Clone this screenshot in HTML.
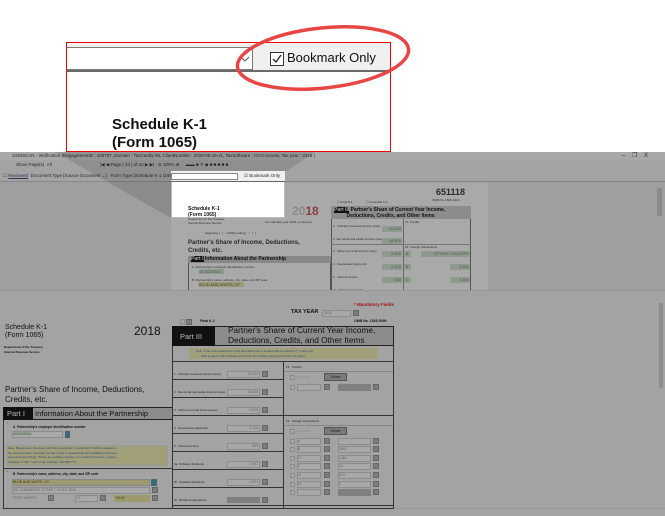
<!DOCTYPE html>
<html><head><meta charset="utf-8"><style>
*{margin:0;padding:0;box-sizing:border-box}
body{width:665px;height:516px;overflow:hidden;background:#fff;font-family:"Liberation Sans",Arial,sans-serif;position:relative}
.a{position:absolute}
.t{position:absolute;white-space:nowrap;color:#2a2a2a}
.g{position:absolute;background:#8f9a8f;font-size:4px;color:#4a5a4a;text-align:right;padding-right:1px;line-height:6px}
.in{position:absolute;background:#a8a8a8;border:1px solid #8c8c8c;font-size:3.5px;color:#666;line-height:5px}
.btn{position:absolute;width:6px;height:6px;background:#7c7c7c;border:1px solid #666}
.h{position:absolute;height:1px;background:#333}
.v{position:absolute;width:1px;background:#333}
.cb{position:absolute;width:5px;height:5px;border:1px solid #8a8a8a;background:#a6a6a6}
</style></head><body>

<!-- top zoom -->
<div class="a" style="left:66px;top:42px;width:325px;height:110px;border:1px solid #e00;background:#fff;overflow:hidden">
 <div class="a" style="left:0;top:0;width:325px;height:28px;background:#f0f0f0"></div>
 <div class="a" style="left:-2px;top:4px;width:188px;height:23px;background:#fff;border:1px solid #7a7a7a"></div>
 <svg class="a" style="left:173px;top:12px" width="10" height="8"><path d="M1 2 L5 6 L9 2" stroke="#555" fill="none"/></svg>
 <div class="a" style="left:203px;top:9px;width:14px;height:14px;border:1px solid #333;background:#fff"></div>
 <svg class="a" style="left:204px;top:10px" width="12" height="12"><path d="M2 6 L5 9 L10 2" stroke="#222" stroke-width="1.3" fill="none"/></svg>
 <div class="t" style="left:220px;top:7px;font-size:13px;color:#111">Bookmark Only</div>
 <div class="a" style="left:0;top:27px;width:325px;height:2px;background:#6a6a6a"></div>
 <div class="t" style="left:45px;top:73px;font-size:15px;font-weight:bold;color:#111;line-height:18px">Schedule K-1<br>(Form 1065)</div>
</div>
<svg class="a" style="left:228px;top:18px" width="190" height="80"><ellipse cx="95" cy="40" rx="86" ry="30" transform="rotate(-6 95 40)" fill="none" stroke="#e84545" stroke-width="3.5"/></svg>

<!-- middle app screenshot -->
<div class="a" style="left:0;top:152px;width:665px;height:138px;background:#9f9f9f;overflow:hidden">
 <div class="a" style="left:0;top:0;width:665px;height:8px;background:#a8a8a8"></div>
 <div class="t" style="left:12px;top:1px;font-size:4.5px">1040SCAN : Verification (EngagementID : 429797, Domain : TaxCaddy-06, ClientNumber : 2020-06-15-v1, TaxSoftware : CCH Access, Tax year : 2018 )</div>
 <div class="t" style="left:622px;top:0;font-size:6px">–&nbsp;&nbsp;&nbsp;&nbsp;❐&nbsp;&nbsp;&nbsp;&nbsp;X</div>
 <div class="a" style="left:0;top:8px;width:665px;height:11px;background:#a3a3a3"></div>
 <div class="t" style="left:16px;top:10px;font-size:4.5px">Show Page(s) &nbsp;All</div>
 <div class="t" style="left:100px;top:10px;font-size:4.5px">|◀ ◀ Page [ 23 ] of 42 ▶ ▶| &nbsp; ⊖ 100% ⊕ &nbsp;&nbsp;&nbsp; ▬▬ ■ ✕ ◆ ■ ■ ■ ■ ■</div>
 <div class="a" style="left:0;top:19px;width:665px;height:11px;background:#a3a3a3;border-bottom:1px solid #888"></div>
 <div class="t" style="left:3px;top:21px;font-size:4.5px">☐ <u style="color:#335">Reviewed</u> &nbsp;Document Type [Source Document ⌄] &nbsp; Form Type [Schedule K-1 (1065)]</div>
 <div class="a" style="left:171px;top:31px;width:317px;height:107px;background:#a9a9a9"></div>
 <svg class="a" style="left:0;top:0" width="665" height="138"><polygon points="55,0 171,66 285,20 315,0" fill="#000" opacity=".12"/></svg>
 <div class="a" style="left:171px;top:19px;width:114px;height:47px;background:#fff;border:1px solid #bbb"></div>
 <div class="a" style="left:171px;top:19px;width:114px;height:11px;background:#f0f0f0;border-bottom:1px solid #666"></div>
 <div class="a" style="left:171px;top:21px;width:67px;height:7px;background:#fff;border:1px solid #888"></div>
 <div class="t" style="left:244px;top:21px;font-size:4.5px;color:#222">☑ Bookmark Only</div>
 <div class="t" style="left:188px;top:54px;font-size:5px;font-weight:bold;color:#111;line-height:6px">Schedule K-1<br>(Form 1065)</div>
 <div class="t" style="left:188px;top:66px;font-size:3px;line-height:3.5px">Department of the Treasury<br>Internal Revenue Service</div>
 <div class="t" style="left:292px;top:52px;font-size:12px;font-weight:bold;color:#8a8a8a">20<span style="color:#8a4040">18</span></div>
 <div class="t" style="left:265px;top:68px;font-size:3px">For calendar year 2018, or tax year</div>
 <div class="t" style="left:205px;top:79px;font-size:3px">beginning [&nbsp;&nbsp;&nbsp;/&nbsp;&nbsp;&nbsp;/ 2018] ending [&nbsp;&nbsp;&nbsp;/&nbsp;&nbsp;&nbsp;/&nbsp;&nbsp;&nbsp;]</div>
 <div class="t" style="left:188px;top:88px;font-size:6px;font-weight:bold;line-height:7.5px">Partner's Share of Income, Deductions,<br>Credits, etc.</div>
 <div class="a" style="left:188px;top:104px;width:143px;height:36px;border:1px solid #555"></div>
 <div class="a" style="left:188px;top:104px;width:143px;height:7px;background:#888"></div>
 <div class="t" style="left:191px;top:104px;font-size:5px;font-weight:bold;color:#111"><span style="background:#111;color:#aaa">Part I</span> Information About the Partnership</div>
 <div class="t" style="left:192px;top:113px;font-size:3px">A&nbsp; Partnership's employer identification number</div>
 <div class="g" style="left:199px;top:117px;width:25px;height:5px;text-align:left">45-5425541</div>
 <div class="t" style="left:192px;top:126px;font-size:3px">B&nbsp; Partnership's name, address, city, state, and ZIP code</div>
 <div class="a" style="left:199px;top:130px;width:45px;height:5px;background:#9c9a74;font-size:4px;color:#443">BLUE AND WHITE, LP</div>
 <div class="t" style="left:436px;top:35px;font-size:9px;font-weight:bold">651118</div>
 <div class="t" style="left:432px;top:46px;font-size:3px">OMB No. 1545-0123</div>
 <div class="t" style="left:337px;top:48px;font-size:3px">☐ Final K-1 &nbsp;&nbsp;&nbsp;&nbsp;&nbsp;&nbsp;&nbsp;&nbsp;&nbsp;&nbsp;&nbsp;&nbsp;&nbsp;&nbsp; ☐ Amended K-1</div>
 <div class="a" style="left:331px;top:54px;width:140px;height:86px;border:1px solid #555"></div>
 <div class="a" style="left:331px;top:54px;width:140px;height:13px;background:#8c8c8c"></div>
 <div class="t" style="left:334px;top:55px;font-size:5px;font-weight:bold;line-height:6px;color:#111"><span style="background:#111;color:#aaa">Part III</span> Partner's Share of Current Year Income,<br>&nbsp;&nbsp;&nbsp;&nbsp;&nbsp;&nbsp;&nbsp;&nbsp;&nbsp;Deductions, Credits, and Other Items</div>
 <div class="a" style="left:403px;top:67px;width:1px;height:73px;background:#666"></div>
 <div class="t" style="left:333px;top:68px;font-size:3px;line-height:12.7px">1&nbsp;&nbsp; Ordinary business income (loss)<br>2&nbsp; Net rental real estate income (loss)<br>3&nbsp;&nbsp; Other net rental income (loss)<br>4&nbsp;&nbsp; Guaranteed payments<br>5&nbsp;&nbsp; Interest income<br>6a&nbsp; Ordinary dividends</div>
 <div class="t" style="left:405px;top:68px;font-size:3px">15&nbsp; Credits</div>
 <div class="t" style="left:405px;top:93px;font-size:3px">16&nbsp; Foreign transactions</div>
 <div class="a" style="left:331px;top:92px;width:140px;height:1px;background:#777"></div>
 <div class="g" style="left:382px;top:74px;width:20px;height:6px">15,000</div>
 <div class="g" style="left:382px;top:86px;width:20px;height:6px">18,500</div>
 <div class="g" style="left:382px;top:99px;width:20px;height:6px">2,500</div>
 <div class="g" style="left:382px;top:112px;width:20px;height:6px">2,100</div>
 <div class="g" style="left:382px;top:125px;width:20px;height:6px">635</div>
 <div class="g" style="left:404px;top:99px;width:7px;height:6px;text-align:center">A</div>
 <div class="g" style="left:404px;top:112px;width:7px;height:6px;text-align:center">B</div>
 <div class="g" style="left:404px;top:125px;width:7px;height:6px;text-align:center">C</div>
 <div class="g" style="left:421px;top:99px;width:49px;height:6px">OTHER COUNTRY</div>
 <div class="g" style="left:450px;top:112px;width:20px;height:6px">2,893</div>
 <div class="g" style="left:450px;top:125px;width:20px;height:6px">1,464</div>
 <div class="a" style="left:657px;top:36px;width:5px;height:28px;background:#8a8a8a"></div>
</div>

<!-- bottom zoomed form -->
<div class="a" style="left:0;top:290px;width:665px;height:226px;background:#a3a3a3;overflow:hidden">
 <div class="a" style="left:0;top:0;width:665px;height:1px;background:#999"></div>
 <div class="a" style="left:659px;top:13px;width:4px;height:85px;background:#8d8d8d"></div>
 <div class="a" style="left:0;top:218px;width:665px;height:1px;background:#999"></div>
 <div class="t" style="left:354px;top:12px;font-size:4.5px;font-weight:bold;color:#a01818">* Mandatory Fields</div>
 <div class="t" style="left:291px;top:19px;font-size:5.5px;font-weight:bold;color:#111">TAX YEAR</div>
 <div class="in" style="left:322px;top:20px;width:29px;height:7px">&nbsp;2018</div>
 <div class="btn" style="left:353px;top:20px"></div>
 <div class="cb" style="left:180px;top:29px"></div><div class="btn" style="left:186px;top:29px"></div>
 <div class="t" style="left:200px;top:29px;font-size:3.5px;font-weight:bold;color:#111">Final K-1</div>
 <div class="t" style="left:354px;top:29px;font-size:3.5px;font-weight:bold;color:#111">OMB No. 1545-0099</div>
 <div class="t" style="left:5px;top:34px;font-size:7px;color:#111;line-height:8px">Schedule K-1<br>(Form 1065)</div>
 <div class="t" style="left:4px;top:55px;font-size:3px;font-weight:bold;color:#111;line-height:4.5px">Department of the Treasury<br>Internal Revenue Service</div>
 <div class="t" style="left:134px;top:34px;font-size:12px;color:#111">2018</div>
 <div class="t" style="left:5px;top:95px;font-size:8px;color:#111;line-height:9.5px">Partner's Share of Income, Deductions,<br>Credits, etc.</div>
 <!-- Part I -->
 <div class="a" style="left:3px;top:117px;width:170px;height:102px;border:1px solid #333"></div>
 <div class="a" style="left:3px;top:117px;width:170px;height:13px;background:#8c8c8c;border:1px solid #222"></div>
 <div class="a" style="left:3px;top:117px;width:30px;height:13px;background:#111"></div>
 <div class="t" style="left:7px;top:119px;font-size:7.5px;color:#bbb">Part I</div>
 <div class="t" style="left:35px;top:119px;font-size:7.6px;color:#111">Information About the Partnership</div>
 <div class="t" style="left:7px;top:131px;font-size:4px;color:#a01818">*</div>
 <div class="t" style="left:13px;top:135px;font-size:3.2px;font-weight:bold;color:#111">A&nbsp; Partnership's employer identification number</div>
 <div class="in" style="left:12px;top:141px;width:51px;height:7px;color:#2a5a2a">45-5425541</div>
 <div class="a" style="left:65px;top:141px;width:5px;height:7px;background:#3c6878"></div>
 <div class="a" style="left:6px;top:155px;width:162px;height:21px;background:#a19e7a;border:1px solid #999"></div>
 <div class="t" style="left:8px;top:156px;font-size:2.9px;color:#2a4a78;line-height:4.6px">Note: Please select the desire EIN from dropdown, if proforma'd. If EIN is masked on<br>the document then, ascertain the last 4 digit of masked EIN with available proforma'd<br>and select accordingly. If there are multiple matches or no match found then, replace<br>character 'x' OR '*' with '9' (for example, "99-999****").</div>
 <div class="h" style="left:3px;top:178px;width:170px"></div>
 <div class="t" style="left:7px;top:179px;font-size:4px;color:#a01818">*</div>
 <div class="t" style="left:13px;top:182px;font-size:3.2px;font-weight:bold;color:#111">B&nbsp; Partnership's name, address, city, state, and ZIP code</div>
 <div class="a" style="left:12px;top:189px;width:138px;height:7px;background:#9c9a6e;border:1px solid #888;font-size:3.5px;color:#3a3a10;line-height:5px">BLUE AND WHITE, LP</div>
 <div class="a" style="left:151px;top:189px;width:6px;height:7px;background:#3c6878"></div>
 <div class="in" style="left:12px;top:197px;width:138px;height:7px">301 COMMERCE STREET, SUITE 3300</div>
 <div class="btn" style="left:152px;top:197px"></div>
 <div class="t" style="left:13px;top:206px;font-size:3.5px;color:#666">FORT WORTH</div>
 <div class="btn" style="left:48px;top:205px"></div>
 <div class="in" style="left:75px;top:205px;width:23px;height:7px">TX</div>
 <div class="btn" style="left:100px;top:205px"></div>
 <div class="a" style="left:114px;top:205px;width:36px;height:7px;background:#9c9a6e;font-size:3.5px;color:#3a3a10;line-height:6px">&nbsp;76102</div>
 <div class="btn" style="left:152px;top:205px"></div>
 <!-- Part III -->
 <div class="a" style="left:172px;top:36px;width:222px;height:183px;border:1px solid #333"></div>
 <div class="a" style="left:172px;top:36px;width:222px;height:20px;background:#8c8c8c;border:1px solid #222"></div>
 <div class="a" style="left:172px;top:36px;width:43px;height:20px;background:#111"></div>
 <div class="t" style="left:180px;top:42px;font-size:7.5px;color:#bbb">Part III</div>
 <div class="t" style="left:228px;top:36px;font-size:8.3px;color:#111;line-height:9.5px">Partner's Share of Current Year Income,<br>Deductions, Credits, and Other Items</div>
 <div class="a" style="left:189px;top:58px;width:189px;height:11px;background:#a19e7a"></div>
 <div class="t" style="left:196px;top:59px;font-size:2.9px;color:#2a4a78;line-height:4.5px">Note: If the code selected from the drop-down box is marked with an asterisk (*), it does not<br>&nbsp;&nbsp;&nbsp;&nbsp;&nbsp;&nbsp;have a place in Tax Software and hence the corresponding amount will not export.</div>
 <div class="h" style="left:172px;top:71px;width:222px"></div>
 <div class="v" style="left:283px;top:71px;height:147px"></div>
 <div class="t" style="left:174px;top:75px;font-size:3px;color:#222;line-height:18px">1&nbsp;&nbsp; Ordinary business income (loss)<br>2&nbsp;&nbsp; Net rental real estate income (loss)<br>3&nbsp;&nbsp; Other net rental income (loss)<br>4&nbsp;&nbsp; Guaranteed payments<br>5&nbsp;&nbsp; Interest income<br>6a&nbsp; Ordinary dividends<br>6b&nbsp; Qualified dividends<br>6c&nbsp; Dividend equivalents</div>
 <div class="h" style="left:172px;top:89px;width:111px"></div>
 <div class="h" style="left:172px;top:107px;width:111px"></div>
 <div class="h" style="left:172px;top:125px;width:222px"></div>
 <div class="h" style="left:172px;top:143px;width:111px"></div>
 <div class="h" style="left:172px;top:161px;width:111px"></div>
 <div class="h" style="left:172px;top:179px;width:111px"></div>
 <div class="h" style="left:172px;top:197px;width:111px"></div>
 <div class="h" style="left:172px;top:215px;width:222px"></div>
 <div class="in" style="left:227px;top:81px;width:33px;height:7px;text-align:right">15,000&nbsp;</div>
 <div class="in" style="left:227px;top:99px;width:33px;height:7px;text-align:right">18,500&nbsp;</div>
 <div class="in" style="left:227px;top:117px;width:33px;height:7px;text-align:right">2,500&nbsp;</div>
 <div class="in" style="left:227px;top:135px;width:33px;height:7px;text-align:right">2,100&nbsp;</div>
 <div class="in" style="left:227px;top:153px;width:33px;height:7px;text-align:right">635&nbsp;</div>
 <div class="in" style="left:227px;top:171px;width:33px;height:7px;text-align:right">1,097&nbsp;</div>
 <div class="in" style="left:227px;top:189px;width:33px;height:7px;text-align:right">1,097&nbsp;</div>
 <div class="a" style="left:227px;top:207px;width:33px;height:6px;background:#7f7f7f"></div>
 <div class="btn" style="left:262px;top:81px"></div><div class="btn" style="left:262px;top:99px"></div><div class="btn" style="left:262px;top:117px"></div><div class="btn" style="left:262px;top:135px"></div><div class="btn" style="left:262px;top:153px"></div><div class="btn" style="left:262px;top:171px"></div><div class="btn" style="left:262px;top:189px"></div><div class="btn" style="left:262px;top:207px"></div>
 <div class="t" style="left:286px;top:75px;font-size:3px;color:#222">15&nbsp;&nbsp; Credits</div>
 <div class="a" style="left:284px;top:81px;width:109px;height:1px;background:#888"></div>
 <div class="cb" style="left:290px;top:85px"></div>
 <div class="t" style="left:297px;top:85px;font-size:3px;color:#888">Select All</div>
 <div class="a" style="left:324px;top:83px;width:23px;height:8px;background:#7a7a7a;border:1px solid #555;font-size:3.5px;color:#222;text-align:center;line-height:6px">Delete</div>
 <div class="cb" style="left:290px;top:95px"></div>
 <div class="in" style="left:297px;top:94px;width:24px;height:7px"></div>
 <div class="btn" style="left:324px;top:94px"></div>
 <div class="a" style="left:338px;top:94px;width:33px;height:7px;background:#7f7f7f"></div>
 <div class="btn" style="left:373px;top:94px"></div>
 <div class="t" style="left:286px;top:129px;font-size:3px;color:#222">16&nbsp;&nbsp; Foreign transactions</div>
 <div class="a" style="left:284px;top:135px;width:109px;height:1px;background:#888"></div>
 <div class="cb" style="left:290px;top:139px"></div>
 <div class="t" style="left:297px;top:139px;font-size:3px;color:#888">Select All</div>
 <div class="a" style="left:324px;top:137px;width:23px;height:8px;background:#7a7a7a;border:1px solid #555;font-size:3.5px;color:#222;text-align:center;line-height:6px">Delete</div>

 <div class="cb" style="left:290px;top:149px"></div><div class="in" style="left:297px;top:148px;width:24px;height:7px">A</div><div class="btn" style="left:324px;top:148px"></div><div class="in" style="left:338px;top:148px;width:33px;height:7px"></div><div class="btn" style="left:373px;top:148px"></div>
 <div class="cb" style="left:290px;top:157px"></div><div class="in" style="left:297px;top:156px;width:24px;height:7px">B</div><div class="btn" style="left:324px;top:156px"></div><div class="in" style="left:338px;top:156px;width:33px;height:7px">2893</div><div class="btn" style="left:373px;top:156px"></div>
 <div class="cb" style="left:290px;top:166px"></div><div class="in" style="left:297px;top:165px;width:24px;height:7px">C*</div><div class="btn" style="left:324px;top:165px"></div><div class="in" style="left:338px;top:165px;width:33px;height:7px">1464</div><div class="btn" style="left:373px;top:165px"></div>
 <div class="cb" style="left:290px;top:174px"></div><div class="in" style="left:297px;top:173px;width:24px;height:7px">F</div><div class="btn" style="left:324px;top:173px"></div><div class="in" style="left:338px;top:173px;width:33px;height:7px">36</div><div class="btn" style="left:373px;top:173px"></div>
 <div class="cb" style="left:290px;top:183px"></div><div class="in" style="left:297px;top:182px;width:24px;height:7px">J*</div><div class="btn" style="left:324px;top:182px"></div><div class="in" style="left:338px;top:182px;width:33px;height:7px">573</div><div class="btn" style="left:373px;top:182px"></div>
 <div class="cb" style="left:290px;top:192px"></div><div class="in" style="left:297px;top:191px;width:24px;height:7px">M</div><div class="btn" style="left:324px;top:191px"></div><div class="in" style="left:338px;top:191px;width:33px;height:7px">0</div><div class="btn" style="left:373px;top:191px"></div>
 <div class="cb" style="left:290px;top:200px"></div><div class="in" style="left:297px;top:199px;width:24px;height:7px"></div><div class="btn" style="left:324px;top:199px"></div><div class="a" style="left:338px;top:199px;width:33px;height:7px;background:#7f7f7f"></div><div class="btn" style="left:373px;top:199px"></div>
</div>
</body></html>
